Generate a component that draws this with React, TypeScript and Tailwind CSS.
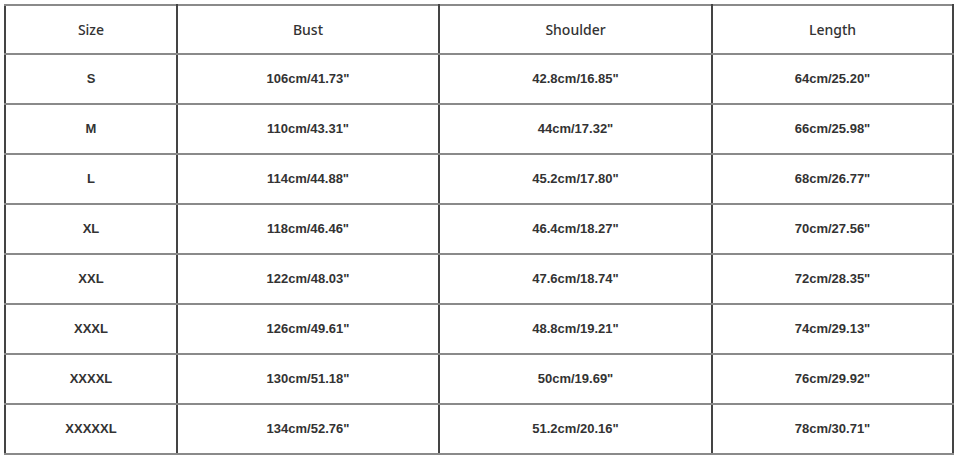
import React from 'react';

const rows = [
  ['S', '106cm/41.73"', '42.8cm/16.85"', '64cm/25.20"'],
  ['M', '110cm/43.31"', '44cm/17.32"', '66cm/25.98"'],
  ['L', '114cm/44.88"', '45.2cm/17.80"', '68cm/26.77"'],
  ['XL', '118cm/46.46"', '46.4cm/18.27"', '70cm/27.56"'],
  ['XXL', '122cm/48.03"', '47.6cm/18.74"', '72cm/28.35"'],
  ['XXXL', '126cm/49.61"', '48.8cm/19.21"', '74cm/29.13"'],
  ['XXXXL', '130cm/51.18"', '50cm/19.69"', '76cm/29.92"'],
  ['XXXXXL', '134cm/52.76"', '51.2cm/20.16"', '78cm/30.71"'],
];

const headers = ['Size', 'Bust', 'Shoulder', 'Length'];
const widths = ['w-[172px]', 'w-[262px]', 'w-[273px]', 'w-[241px]'];

export default function App() {
  return (
    <div className="w-[956px] h-[457px] bg-white pt-[4px] pl-[4px]">
      <table className="border-collapse table-fixed w-[948px] text-[#333]">
        <thead>
          <tr className="h-[49px]">
            {headers.map((h, i) => (
              <th
                key={h}
                className={`${widths[i]} border-2 border-y-[#8a8a8a] border-x-[#444] text-center font-medium text-[14px] [font-family:'Noto_Sans',sans-serif] p-0`}
              >
                {h}
              </th>
            ))}
          </tr>
        </thead>
        <tbody>
          {rows.map((r) => (
            <tr key={r[0]} className="h-[50px]">
              {r.map((c, i) => (
                <td
                  key={i}
                  className="border-2 border-y-[#8a8a8a] border-x-[#444] text-center font-bold text-[13px] [font-family:'Liberation_Sans',Arial,sans-serif] p-0"
                >
                  {c}
                </td>
              ))}
            </tr>
          ))}
        </tbody>
      </table>
    </div>
  );
}
